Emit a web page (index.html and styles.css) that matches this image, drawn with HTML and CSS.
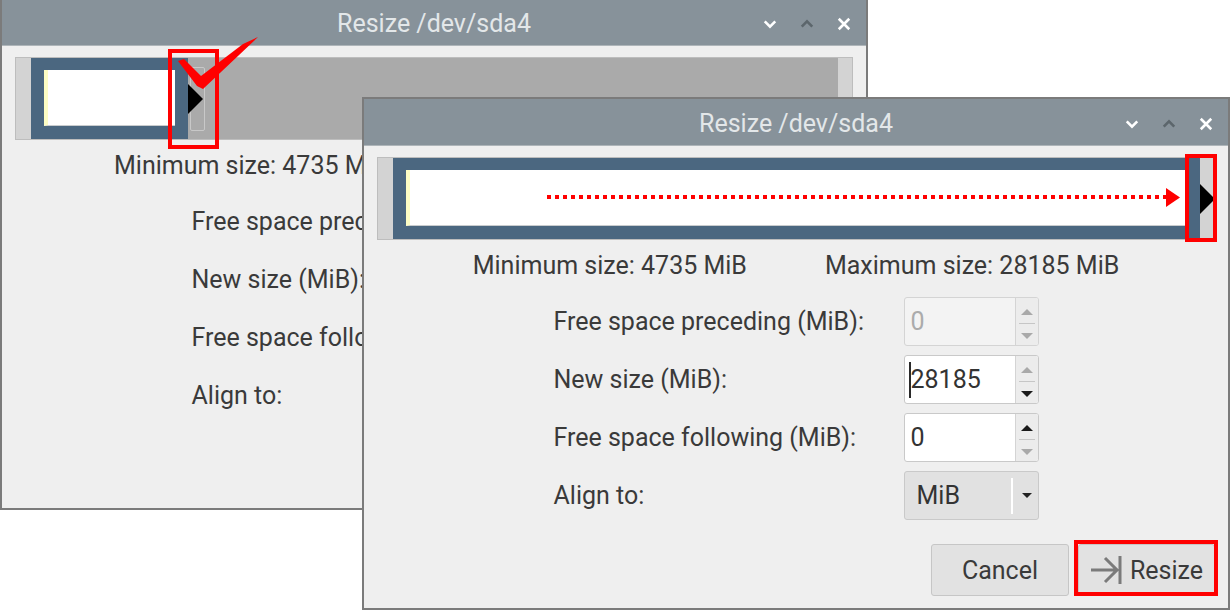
FILE: index.html
```html
<!DOCTYPE html>
<html>
<head>
<meta charset="utf-8">
<title>Resize /dev/sda4</title>
<link rel="stylesheet" href="styles.css">
</head>
<body>
<div class="desk">

  <section class="win win-back">
    <header class="titlebar">
      <span></span>
      <span class="title">Resize /dev/sda4</span>
      <span class="tb-btns">
        <svg class="tb-ico" viewBox="0 0 16 16"><polyline points="2,5 8,11 14,5"/></svg>
        <svg class="tb-ico dim" viewBox="0 0 16 16"><polyline points="2,11 8,5 14,11"/></svg>
        <svg class="tb-ico" viewBox="0 0 16 16"><path d="M2 2 L14 14 M14 2 L2 14"/></svg>
      </span>
    </header>
    <div class="body">
      <div class="slider">
        <div class="handle"></div>
        <div class="part part-small"><div class="part-inner"></div></div>
        <div class="free"><div class="free-box"></div></div>
        <div class="handle handle-r"></div>
      </div>
      <div class="sizes sizes-back">
        <span>Minimum size: 4735 MiB</span>
      </div>
      <div class="form form-back">
        <span>Free space preceding (MiB):</span>
        <span>New size (MiB):</span>
        <span>Free space following (MiB):</span>
        <span>Align to:</span>
      </div>
    </div>
  </section>

  <section class="win win-front">
    <header class="titlebar">
      <span></span>
      <span class="title">Resize /dev/sda4</span>
      <span class="tb-btns">
        <svg class="tb-ico" viewBox="0 0 16 16"><polyline points="2,5 8,11 14,5"/></svg>
        <svg class="tb-ico dim" viewBox="0 0 16 16"><polyline points="2,11 8,5 14,11"/></svg>
        <svg class="tb-ico" viewBox="0 0 16 16"><path d="M2 2 L14 14 M14 2 L2 14"/></svg>
      </span>
    </header>
    <div class="body">
      <div class="slider">
        <div class="handle"></div>
        <div class="part part-full"><div class="part-inner"></div></div>
        <div class="handle handle-r"></div>
      </div>
      <div class="sizes">
        <span>Minimum size: 4735 MiB</span>
        <span>Maximum size: 28185 MiB</span>
      </div>
      <div class="form">
        <span>Free space preceding (MiB):</span>
        <div class="spin disabled"><span class="spin-val">0</span><span class="spin-btns"><i class="arr-up off"></i><i class="sep"></i><i class="arr-down off"></i></span></div>
        <span>New size (MiB):</span>
        <div class="spin focus"><span class="spin-val"><i class="caret"></i>28185</span><span class="spin-btns"><i class="arr-up off"></i><i class="sep"></i><i class="arr-down"></i></span></div>
        <span>Free space following (MiB):</span>
        <div class="spin"><span class="spin-val">0</span><span class="spin-btns"><i class="arr-up"></i><i class="sep"></i><i class="arr-down off"></i></span></div>
        <span>Align to:</span>
        <div class="combo"><span class="combo-val">MiB</span><span class="combo-sep"></span><span class="combo-arrow"><i class="arr-small"></i></span></div>
      </div>
      <div class="actions">
        <button class="btn btn-cancel">Cancel</button>
        <button class="btn btn-resize"><svg class="resize-ico" viewBox="0 0 32 28"><path d="M1 14 H28 M15 2 L27 14 L15 26 M30 0 V28"/></svg>Resize</button>
      </div>
    </div>
  </section>

  <svg class="marks" width="1230" height="610" viewBox="0 0 1230 610">
    <rect x="170" y="51" width="47" height="96" fill="none" stroke="#ff0000" stroke-width="4"/>
    <polygon points="178,61 184,59 201,76 243,44 258,37 203,89 197,86" fill="#ff0000"/>
    <line x1="547" y1="197" x2="1166" y2="197" stroke="#ff0000" stroke-width="4" stroke-dasharray="4 4"/>
    <polygon points="1166,188 1180,197.5 1166,207" fill="#ff0000"/>
    <rect x="1187" y="156" width="28" height="84" fill="none" stroke="#ff0000" stroke-width="4"/>
    <rect x="1076" y="542" width="140" height="52" fill="none" stroke="#ff0000" stroke-width="4"/>
  </svg>
</div>
</body>
</html>
```

FILE: styles.css
```css
* { box-sizing: border-box; }
html, body { margin: 0; padding: 0; background: #ffffff; }
body {
  font-family: Roboto, "Noto Sans", "Liberation Sans", sans-serif;
  color: #3a3a3a;
}
.desk {
  position: relative;
  width: 1230px;
  height: 610px;
  overflow: hidden;
}

/* windows */
.win {
  position: absolute;
  width: 868px;
  height: 513px;
  border: 2px solid #7b7b7b;
  background: #efefef;
  display: flex;
  flex-direction: column;
}
.win-back { left: 0; top: -3px; }
.win-front { left: 362px; top: 97px; }

.titlebar {
  flex: none;
  height: 47px;
  background: #87929a;
  border-bottom: 1px solid #aeb5b9;
  display: grid;
  grid-template-columns: 1fr auto 1fr;
  align-items: center;
}
.title {
  font-size: 25px;
  color: #e3e7e9;
  padding-top: 2px;
}
.tb-btns {
  display: flex;
  justify-content: flex-end;
  align-items: center;
  gap: 23px;
  padding-right: 15px;
  padding-top: 4px;
}
.tb-ico {
  width: 14px;
  height: 14px;
  fill: none;
  stroke: #ffffff;
  stroke-width: 3;
}
.tb-ico.dim { stroke: #5c666c; }

.body {
  flex: 1;
  display: flex;
  flex-direction: column;
  padding: 11px 13px 0;
}

/* partition slider */
.slider {
  position: relative;
  height: 83px;
  display: flex;
  border: 1px solid #bdbdbd;
  background: #d3d3d3;
}
.handle { width: 15px; flex: none; }
.handle-r { width: 14px; }
.part {
  position: relative;
  background: #4b6780;
  padding: 12px 13px 13px;
}
.part-small { width: 157px; flex: none; }
.part-full { flex: 1; }
.part::after {
  content: "";
  position: absolute;
  left: 100%;
  top: 50%;
  margin-top: -15px;
  border-top: 15px solid transparent;
  border-bottom: 15px solid transparent;
  border-left: 15px solid #000000;
}
.part-inner {
  height: 100%;
  background: #ffffff;
  border-left: 4px solid #fdfdc4;
  border-bottom: 1px solid #c9ccce;
}
.free {
  flex: 1;
  background: #aaaaaa;
  display: flex;
  align-items: center;
  padding-left: 2px;
}
.free-box {
  width: 15px;
  height: 64px;
  border: 1px solid #c8c8c8;
  border-radius: 2px;
}

/* size line */
.sizes {
  height: 50px;
  display: flex;
  justify-content: center;
  align-items: center;
  gap: 78px;
  font-size: 25px;
}
.sizes-back {
  justify-content: flex-start;
  padding-left: 99px;
}

/* form */
.form {
  margin-top: 7px;
  display: grid;
  grid-template-columns: 350px 135px;
  grid-auto-rows: 49px;
  row-gap: 9px;
  justify-content: center;
  align-items: center;
  font-size: 25px;
}
.form-back > span { grid-column: 1; }

.spin {
  height: 49px;
  display: flex;
  border: 1px solid #c9c9c9;
  border-radius: 3px;
  background: #ffffff;
  overflow: hidden;
}
.spin-val {
  flex: 1;
  display: flex;
  align-items: center;
  padding-left: 6px;
  color: #333333;
}
.spin.disabled { background: #f3f3f3; border-color: #d4d4d4; }
.spin.disabled .spin-val { color: #ababab; }
.spin.focus .spin-val { padding-left: 4px; }
.caret {
  width: 2px;
  height: 36px;
  background: #2a2a2a;
}
.spin-btns {
  width: 23px;
  flex: none;
  background: #ececec;
  border-left: 1px solid #d4d4d4;
  display: flex;
  flex-direction: column;
  align-items: center;
  padding-top: 11px;
}
.arr-up, .arr-down {
  display: block;
  width: 0;
  height: 0;
  border-left: 6px solid transparent;
  border-right: 6px solid transparent;
}
.arr-up { border-bottom: 6px solid #1a1a1a; }
.arr-down { border-top: 6px solid #1a1a1a; }
.arr-up.off { border-bottom-color: #a9a9a9; }
.arr-down.off { border-top-color: #a9a9a9; }
.sep {
  display: block;
  width: 16px;
  height: 1px;
  background: #c6c6c6;
  margin: 8px 0 9px;
}

.combo {
  height: 49px;
  display: flex;
  align-items: center;
  border: 1px solid #c9c9c9;
  border-radius: 3px;
  background: #e1e1e1;
}
.combo-val { flex: 1; padding-left: 12px; color: #333333; }
.combo-sep { width: 2px; height: 36px; background: #ffffff; }
.combo-arrow {
  width: 25px;
  display: flex;
  justify-content: center;
  padding-left: 3px;
}
.arr-small {
  display: block;
  width: 0;
  height: 0;
  border-left: 5px solid transparent;
  border-right: 5px solid transparent;
  border-top: 5px solid #222222;
}

/* buttons */
.actions {
  margin-top: 24px;
  display: flex;
  justify-content: flex-end;
  gap: 9px;
}
.btn {
  height: 52px;
  border: 1px solid #c6c6c6;
  border-radius: 3px;
  background: #e2e2e2;
  font-family: inherit;
  font-size: 25px;
  color: #3a3a3a;
  display: flex;
  align-items: center;
  justify-content: center;
  padding: 0;
}
.btn-cancel { width: 138px; }
.btn-resize { width: 137px; gap: 8px; }
.resize-ico {
  width: 32px;
  height: 28px;
  fill: none;
  stroke: #7b7b7b;
  stroke-width: 3;
}

/* annotations */
.marks {
  position: absolute;
  left: 0;
  top: 0;
  pointer-events: none;
}
```
